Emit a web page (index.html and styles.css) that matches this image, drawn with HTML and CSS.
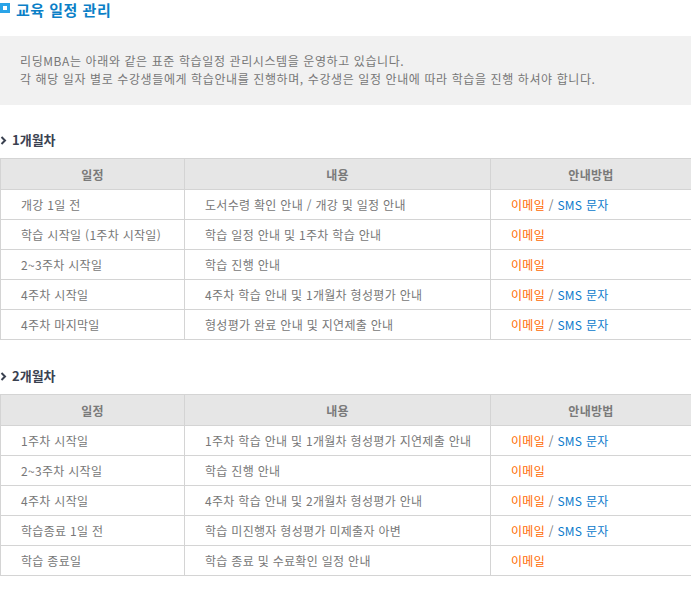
FILE: index.html
```html
<!DOCTYPE html>
<html lang="ko">
<head>
<meta charset="utf-8">
<link rel="stylesheet" href="styles.css">
</head>
<body>
<div class="page">
  <h1 class="title"><span class="title-icon"></span>교육 일정 관리</h1>
  <div class="intro">
    <p>리딩MBA는 아래와 같은 표준 학습일정 관리시스템을 운영하고 있습니다.</p>
    <p>각 해당 일자 별로 수강생들에게 학습안내를 진행하며, 수강생은 일정 안내에 따라 학습을 진행 하셔야 합니다.</p>
  </div>

  <h2 class="sub"><svg class="chev" width="7" height="9" viewBox="0 0 7 9"><polyline points="1.5,1 5,4.5 1.5,8" fill="none" stroke="#3a4150" stroke-width="2"/></svg>1개월차</h2>
  <table class="sched">
    <colgroup><col class="c1"><col class="c2"><col class="c3"></colgroup>
    <thead><tr><th>일정</th><th>내용</th><th>안내방법</th></tr></thead>
    <tbody>
      <tr><td>개강 1일 전</td><td>도서수령 확인 안내 / 개강 및 일정 안내</td><td><span class="mail">이메일</span> / <span class="sms">SMS 문자</span></td></tr>
      <tr><td>학습 시작일 (1주차 시작일)</td><td>학습 일정 안내 및 1주차 학습 안내</td><td><span class="mail">이메일</span></td></tr>
      <tr><td>2~3주차 시작일</td><td>학습 진행 안내</td><td><span class="mail">이메일</span></td></tr>
      <tr><td>4주차 시작일</td><td>4주차 학습 안내 및 1개월차 형성평가 안내</td><td><span class="mail">이메일</span> / <span class="sms">SMS 문자</span></td></tr>
      <tr><td>4주차 마지막일</td><td>형성평가 완료 안내 및 지연제출 안내</td><td><span class="mail">이메일</span> / <span class="sms">SMS 문자</span></td></tr>
    </tbody>
  </table>

  <h2 class="sub"><svg class="chev" width="7" height="9" viewBox="0 0 7 9"><polyline points="1.5,1 5,4.5 1.5,8" fill="none" stroke="#3a4150" stroke-width="2"/></svg>2개월차</h2>
  <table class="sched">
    <colgroup><col class="c1"><col class="c2"><col class="c3"></colgroup>
    <thead><tr><th>일정</th><th>내용</th><th>안내방법</th></tr></thead>
    <tbody>
      <tr><td>1주차 시작일</td><td>1주차 학습 안내 및 1개월차 형성평가 지연제출 안내</td><td><span class="mail">이메일</span> / <span class="sms">SMS 문자</span></td></tr>
      <tr><td>2~3주차 시작일</td><td>학습 진행 안내</td><td><span class="mail">이메일</span></td></tr>
      <tr><td>4주차 시작일</td><td>4주차 학습 안내 및 2개월차 형성평가 안내</td><td><span class="mail">이메일</span> / <span class="sms">SMS 문자</span></td></tr>
      <tr><td>학습종료 1일 전</td><td>학습 미진행자 형성평가 미제출자 아변</td><td><span class="mail">이메일</span> / <span class="sms">SMS 문자</span></td></tr>
      <tr><td>학습 종료일</td><td>학습 종료 및 수료확인 일정 안내</td><td><span class="mail">이메일</span></td></tr>
    </tbody>
  </table>
</div>
</body>
</html>
```

FILE: styles.css
```css
html, body {
  margin: 0;
  padding: 0;
  background: #fff;
}
body {
  font-family: "Noto Sans CJK KR", "Noto Sans", sans-serif;
  font-size: 12px;
  color: #777;
}
.page {
  width: 691px;
}
.title {
  margin: 0;
  height: 36px;
  display: flex;
  align-items: flex-start;
  font-size: 15px;
  font-weight: bold;
  line-height: 20px;
  color: #0b7fc7;
  letter-spacing: 0.5px;
}
.title-icon {
  width: 4px;
  height: 4px;
  margin: 3px 6px 0 0;
  border: 3px solid #2aa4e8;
  background: #fff;
  flex: none;
}
.intro {
  background: #f1f1f1;
  padding: 16px 20px 17px;
  height: 36px;
}
.intro p {
  margin: 0;
  line-height: 18px;
  color: #777;
  letter-spacing: 0.6px;
  white-space: nowrap;
}
.sub {
  margin: 0;
  padding-top: 25px;
  height: 28px;
  font-size: 13px;
  font-weight: bold;
  line-height: 20px;
  color: #3a4150;
  display: flex;
  align-items: flex-start;
}
.sched + .sub {
  padding-top: 26px;
}
.sub .chev {
  flex: none;
  margin: 6px 5px 0 0;
}
.sched {
  width: 691px;
  border-collapse: collapse;
  table-layout: fixed;
}
.c1 { width: 184px; }
.c2 { width: 306px; }
.c3 { width: 201px; }
.sched th,
.sched td {
  border: 1px solid #d4d4d4;
  padding: 0 0 0 20px;
  height: 29px;
  text-align: left;
  font-weight: normal;
  color: #777;
  white-space: nowrap;
  letter-spacing: 0.3px;
}
.sched th {
  height: 30px;
  background: #e6e6e6;
  text-align: center;
  padding: 0;
  font-weight: bold;
  color: #7a7a7a;
}
.mail { color: #ff6a00; }
.sms { color: #0a7acb; }
```
